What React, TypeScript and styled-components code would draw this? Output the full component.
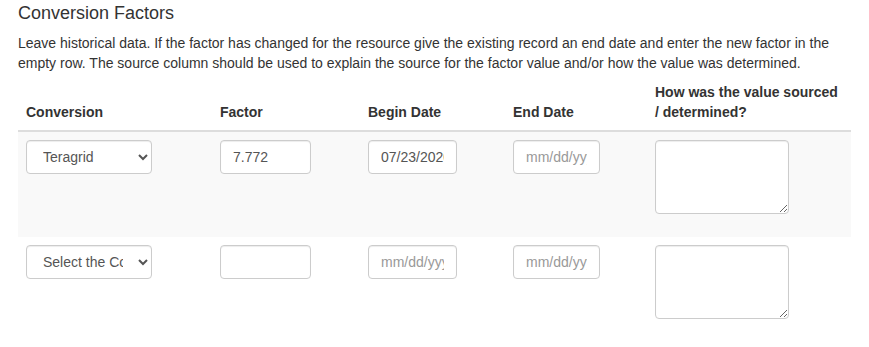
import styled, { createGlobalStyle } from "styled-components";

const GlobalStyle = createGlobalStyle`
  html, body {
    margin: 0;
    padding: 0;
    background: #fff;
  }
  body {
    font-family: "Liberation Sans", Arial, Helvetica, sans-serif;
    font-size: 14px;
    line-height: 1.42857;
    color: #333;
  }
  * {
    box-sizing: border-box;
  }
`;

const Wrapper = styled.div`
  width: 833px;
  margin-left: 18px;
  padding-top: 4px;
`;

const Title = styled.h4`
  margin: 0 0 10px 0;
  font-size: 18px;
  font-weight: 500;
  line-height: 1.1;
`;

const Intro = styled.p`
  margin: 0;
`;

const Table = styled.table`
  width: 833px;
  border-collapse: collapse;
  border-spacing: 0;
  table-layout: fixed;
`;

const Th = styled.th`
  padding: 8px;
  text-align: left;
  vertical-align: bottom;
  font-weight: 700;
  line-height: 20px;
  border-bottom: 2px solid #ddd;
`;

const Row = styled.tr<{ $striped?: boolean }>`
  background-color: ${(p) => (p.$striped ? "#f9f9f9" : "transparent")};
  & + & td {
    border-top: 1px solid #ddd;
  }
`;

const Td = styled.td`
  padding: 8px;
  vertical-align: top;
`;

const FormGroup = styled.div`
  margin-bottom: 15px;
`;

const controlBase = `
  display: block;
  height: 34px;
  padding: 6px 12px;
  font-family: "Liberation Sans", Arial, Helvetica, sans-serif;
  font-size: 14px;
  line-height: 1.42857;
  color: #555;
  background-color: #fff;
  border: 1px solid #ccc;
  border-radius: 4px;
  box-shadow: inset 0 1px 1px rgba(0, 0, 0, 0.075);
  outline: none;
`;

const Select = styled.select`
  ${controlBase}
  width: 126px;
`;

const Input = styled.input<{ $width: number }>`
  ${controlBase}
  width: ${(p) => p.$width}px;
  &::placeholder {
    color: #999;
  }
`;

const TextArea = styled.textarea`
  ${controlBase}
  width: 134px;
  height: 74px;
  resize: both;
`;

type Rec = {
  conversion: string;
  factor: string;
  begin: string;
  end: string;
};

const rows: Rec[] = [
  { conversion: "Teragrid", factor: "7.772", begin: "07/23/2020", end: "" },
  { conversion: "", factor: "", begin: "", end: "" },
];

const App = () => {
  return (
    <>
      <GlobalStyle />
      <Wrapper>
        <Title>Conversion Factors</Title>
        <Intro>
          Leave historical data. If the factor has changed for the resource give the
          existing record an end date and enter the new factor in the empty row. The
          source column should be used to explain the source for the factor value
          and/or how the value was determined.
        </Intro>
        <Table>
          <colgroup>
            <col style={{ width: 194 }} />
            <col style={{ width: 148 }} />
            <col style={{ width: 145 }} />
            <col style={{ width: 142 }} />
            <col style={{ width: 204 }} />
          </colgroup>
          <thead>
            <tr>
              <Th>Conversion</Th>
              <Th>Factor</Th>
              <Th>Begin Date</Th>
              <Th>End Date</Th>
              <Th>How was the value sourced / determined?</Th>
            </tr>
          </thead>
          <tbody>
            {rows.map((r, i) => (
              <Row key={i} $striped={i % 2 === 0}>
                <Td>
                  <FormGroup>
                    <Select defaultValue={r.conversion || "none"}>
                      {r.conversion ? (
                        <option value={r.conversion}>{r.conversion}</option>
                      ) : (
                        <option value="none">Select the Conversion</option>
                      )}
                    </Select>
                  </FormGroup>
                </Td>
                <Td>
                  <FormGroup>
                    <Input $width={91} type="text" defaultValue={r.factor} />
                  </FormGroup>
                </Td>
                <Td>
                  <FormGroup>
                    <Input
                      $width={89}
                      type="text"
                      placeholder="mm/dd/yyyy"
                      defaultValue={r.begin}
                    />
                  </FormGroup>
                </Td>
                <Td>
                  <FormGroup>
                    <Input
                      $width={87}
                      type="text"
                      placeholder="mm/dd/yyyy"
                      defaultValue={r.end}
                    />
                  </FormGroup>
                </Td>
                <Td>
                  <FormGroup>
                    <TextArea />
                  </FormGroup>
                </Td>
              </Row>
            ))}
          </tbody>
        </Table>
      </Wrapper>
    </>
  );
};

export default App;
